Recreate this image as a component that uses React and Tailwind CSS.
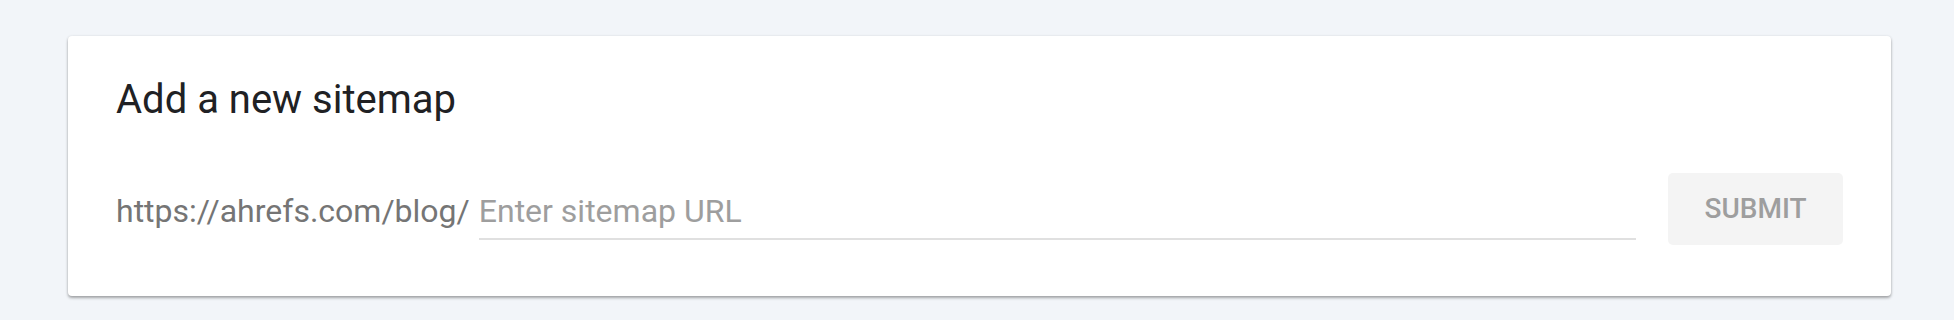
import React from "react";

export default function App() {
  return (
    <div
      className="min-h-[320px] w-full bg-[#f2f5f9] pt-[36px] pl-[68px] pr-[63px]"
      style={{ fontFamily: "Roboto, 'Liberation Sans', sans-serif" }}
    >
      <div className="flex flex-col rounded-[4px] bg-white px-[48px] pt-[40px] pb-[51px] shadow-[0_2px_3px_rgba(0,0,0,0.32),0_0_3px_rgba(0,0,0,0.08)]">
        <h2 className="text-[40px] leading-[48px] font-normal text-[#202124]">
          Add a new sitemap
        </h2>
        <div className="mt-[49px] flex items-start">
          <div className="mt-[18px] flex flex-1 items-start gap-[9px]">
            <span className="text-[32px] leading-[40px] text-[#757575] whitespace-nowrap">
              https://ahrefs.com/blog/
            </span>
            <input
              type="text"
              placeholder="Enter sitemap URL"
              className="flex-1 min-w-0 border-b-2 border-[#e0e0e0] bg-transparent pb-[7px] text-[32px] leading-[40px] text-[#202124] outline-none placeholder:text-[#9e9e9e]"
              style={{ fontFamily: "Roboto, 'Liberation Sans', sans-serif" }}
            />
          </div>
          <button
            type="button"
            className="ml-[32px] flex h-[72px] w-[175px] items-center justify-center rounded-[5px] bg-[#f4f4f4] text-[28px] font-medium text-[#9e9e9e]"
            style={{ fontFamily: "Roboto, 'Liberation Sans', sans-serif" }}
          >
            SUBMIT
          </button>
        </div>
      </div>
    </div>
  );
}
